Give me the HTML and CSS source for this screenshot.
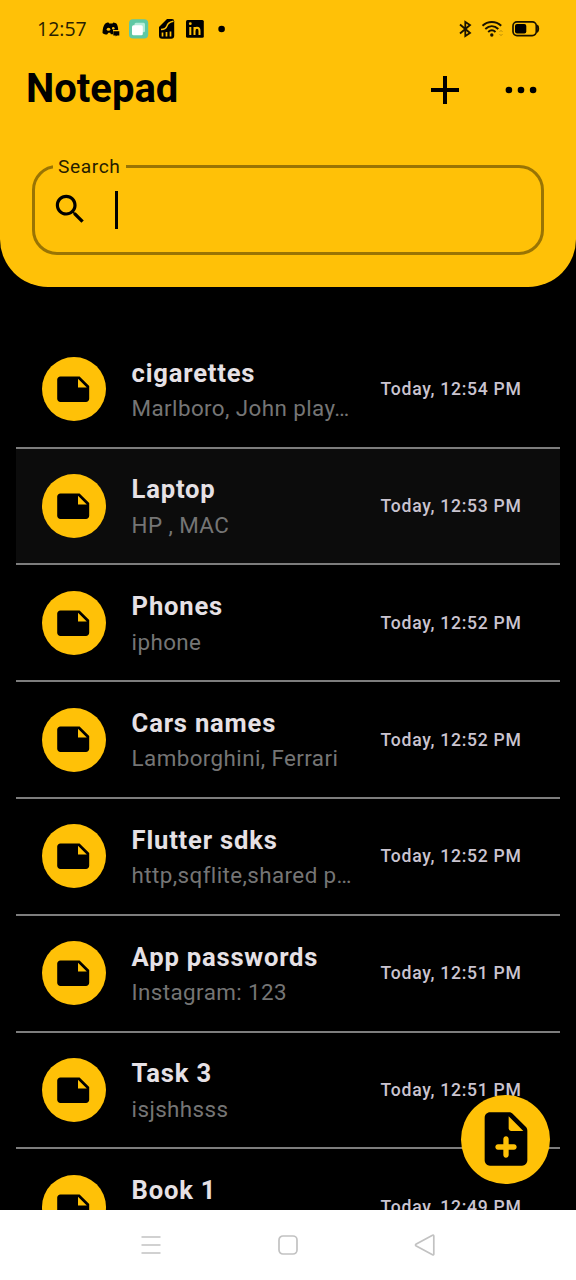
FILE: index.html
```html
<!DOCTYPE html>
<html lang="en">
<head>
<meta charset="utf-8">
<title>Notepad</title>
<link rel="stylesheet" href="styles.css">
</head>
<body>
<svg class="defs" aria-hidden="true">
  <symbol id="note" viewBox="0 0 24 24"><path d="M22 10l-6-6H4c-1.1 0-2 .9-2 2v12.01c0 1.1.9 1.99 2 1.99l16-.01c1.1 0 2-.89 2-1.99v-8zm-7-4.5l5.5 5.5H15V5.5z"/></symbol>
</svg>
<div class="app">
  <header class="header">
    <div class="status">
      <span class="clock">12:57</span>
      <svg class="status-left" viewBox="100 16 128 26" width="128" height="26">
        <path d="M102.500 33c0-4 1-7.500 2.500-9.300 1.200-.9 2.300-1.200 3.500-1.200l.8 1h3.200l.8-1c1.400.1 2.600.5 3.300 1.300 1 1.700 1.500 3.500 1.600 6.200H113v4.300h-2.200l-.6-1.500h-1.800l-1.300 1.700c-1.800 0-3.300-.4-4.600-1.500z"/>
        <ellipse cx="108.500" cy="29.300" rx="1.800" ry="1.500" fill="#ffc107"/><ellipse cx="113.300" cy="28.300" rx="1.300" ry="1.200" fill="#ffc107"/>
        <path d="M113.300 31.300h6v4.200h-2.400l-1.200 1v-1h-2.400z"/>
        <rect x="129" y="19.300" width="19.200" height="19.300" rx="4" fill="#5fc8a4"/>
        <rect x="134.500" y="22.800" width="10.500" height="9.500" rx="1.500" fill="#b5ecd8"/>
        <rect x="132" y="25.300" width="10.800" height="10" rx="1.500" fill="#fff"/>
        <path d="M159 27l8-8h5a2.200 2.200 0 0 1 2.200 2.200v14.600a3 3 0 0 1-3 3H162a3 3 0 0 1-3-3z"/>
        <path d="M161 29.600c4 0 5.200-1.500 6-3.800.8-2.700 2.500-4 6.500-4.600" fill="none" stroke="#ffc107" stroke-width="1.500"/>
        <path d="M162.500 36.500v-4M166.500 36.500v-4.500M170.500 36.500v-5" stroke="#ffc107" stroke-width="1.700"/>
        <rect x="186" y="20" width="17.800" height="17.800" rx="1.500"/>
        <path d="M190.300 27v8M194.500 35v-8M194.500 31c0-4.200 5-4.200 5 0v4" fill="none" stroke="#ffc107" stroke-width="2"/>
        <circle cx="190.300" cy="23.700" r="1.400" fill="#ffc107"/>
        <circle cx="221.600" cy="29" r="3.300"/>
      </svg>
      <svg class="status-right" viewBox="456 16 88 26" width="88" height="26" fill="none" stroke="#1a1300">
        <path d="M460 24.500l10 8.500-4.700 3V22l4.700 3-10 8.500" stroke-width="1.800"/>
        <path d="M482.500 25.700c5.400-5 13.300-5 18.700 0M485.300 28.900c4-3.600 9-3.600 13 0M488.200 31.900c2.400-2.200 4.900-2.200 7.300 0" stroke-width="2"/>
        <circle cx="491.800" cy="35" r="1.700" fill="#1a1300" stroke="none"/>
        <path d="M499.500 32l1.500-1.700 1.500 1.700M499.500 34l1.500 1.700 1.500-1.700" stroke="#b88c08" stroke-width=".9"/>
        <rect x="513" y="21.900" width="23.300" height="13.700" rx="4" stroke-width="1.700"/>
        <rect x="515" y="24" width="11.300" height="9.600" rx="2" fill="#000" stroke="none"/>
        <path d="M537 25.500c1.600.8 1.600 5.700 0 6.500" stroke-width="2"/>
      </svg>
    </div>
    <div class="titlebar">
      <h1>Notepad</h1>
      <svg viewBox="0 0 24 24" width="48" height="48"><path d="M19 13h-6v6h-2v-6H5v-2h6V5h2v6h6v2z"/></svg>
      <svg class="more" viewBox="0 0 32 8" width="32" height="8"><circle cx="3.900" cy="4" r="3.300"/><circle cx="16" cy="4" r="3.300"/><circle cx="28.100" cy="4" r="3.300"/></svg>
    </div>
    <div class="search">
      <span class="search-label">Search</span>
      <svg viewBox="0 0 24 24" width="38.400" height="38.400"><path d="M15.500 14h-.79l-.28-.27C15.410 12.590 16 11.110 16 9.500 16 5.910 13.090 3 9.500 3S3 5.910 3 9.500 5.910 16 9.500 16c1.610 0 3.090-.59 4.230-1.570l.27.28v.79l5 4.990L20.490 19l-4.990-5zm-6 0C7.010 14 5 11.990 5 9.500S7.010 5 9.500 5 14 7.010 14 9.500 11.990 14 9.500 14z"/></svg>
      <span class="caret"></span>
    </div>
  </header>

  <main class="list">
    <article class="row"><span class="avatar"><svg><use href="#note"/></svg></span><div class="body"><h2>cigarettes</h2><p>Marlboro, John play…</p></div><time>Today, 12:54 PM</time></article>
    <article class="row active"><span class="avatar"><svg><use href="#note"/></svg></span><div class="body"><h2>Laptop</h2><p>HP , MAC</p></div><time>Today, 12:53 PM</time></article>
    <article class="row"><span class="avatar"><svg><use href="#note"/></svg></span><div class="body"><h2>Phones</h2><p>iphone</p></div><time>Today, 12:52 PM</time></article>
    <article class="row"><span class="avatar"><svg><use href="#note"/></svg></span><div class="body"><h2>Cars names</h2><p>Lamborghini, Ferrari</p></div><time>Today, 12:52 PM</time></article>
    <article class="row"><span class="avatar"><svg><use href="#note"/></svg></span><div class="body"><h2>Flutter sdks</h2><p>http,sqflite,shared p…</p></div><time>Today, 12:52 PM</time></article>
    <article class="row"><span class="avatar"><svg><use href="#note"/></svg></span><div class="body"><h2>App passwords</h2><p>Instagram: 123</p></div><time>Today, 12:51 PM</time></article>
    <article class="row"><span class="avatar"><svg><use href="#note"/></svg></span><div class="body"><h2>Task 3</h2><p>isjshhsss</p></div><time>Today, 12:51 PM</time></article>
    <article class="row"><span class="avatar"><svg><use href="#note"/></svg></span><div class="body"><h2>Book 1</h2><p>&nbsp;</p></div><time>Today, 12:49 PM</time></article>
  </main>

  <div class="fab">
    <svg viewBox="0 0 24 24" width="64" height="64"><path d="M14.590 2.590c-.38-.38-.89-.59-1.420-.59H6c-1.100 0-2 .9-2 2v16c0 1.100.89 2 1.990 2H18c1.100 0 2-.9 2-2V8.830c0-.53-.21-1.040-.59-1.410l-4.820-4.830zM15 16h-2v2c0 .55-.45 1-1 1s-1-.45-1-1v-2H9c-.55 0-1-.45-1-1s.45-1 1-1h2v-2c0-.55.45-1 1-1s1 .45 1 1v2h2c.55 0 1 .45 1 1s-.45 1-1 1zm-2-8V3.500L18.500 9H14c-.55 0-1-.45-1-1z"/></svg>
  </div>

  <nav class="navbar">
    <svg viewBox="0 0 22 22" width="22" height="22"><path d="M1.500 3h19M1.500 11h19M1.500 19h19"/></svg>
    <svg viewBox="0 0 22 22" width="22" height="22"><rect x="2" y="2" width="18" height="18" rx="4"/></svg>
    <svg viewBox="0 0 22 22" width="22" height="22"><path d="M18.500 1.200q1.300-.5 1.300.9v17.800q0 1.400-1.300.9L2.300 12q-1.600-1 0-2z"/></svg>
  </nav>
</div>
</body>
</html>
```
FILE: styles.css
```css
* { box-sizing: border-box; margin: 0; padding: 0; }
body { background: #000; font-family: Roboto, "Liberation Sans", sans-serif; }
svg { display: block; flex: none; }
.defs { position: absolute; width: 0; height: 0; }

.app {
  position: relative;
  display: flex;
  flex-direction: column;
  width: 576px;
  height: 1280px;
  overflow: hidden;
}

.header {
  flex: none;
  height: 286.500px;
  background: #ffc107;
  border-radius: 0 0 48px 48px;
}
.status {
  display: flex;
  align-items: center;
  height: 58px;
  padding: 0 32px 0 37px;
}
.clock {
  width: 63px;
  padding-bottom: 2px;
  font: 19.500px "Open Sans", sans-serif;
  color: #2a1f00;
}
.status-right { margin-left: auto; }

.titlebar {
  display: flex;
  align-items: center;
  height: 63px;
  padding: 0 39px 0 26px;
}
.titlebar h1 {
  flex: 1;
  padding-bottom: 1px;
  font-size: 40px;
  font-weight: 700;
  line-height: 48px;
}
.more { margin-left: 36px; }

.search {
  position: relative;
  display: flex;
  align-items: center;
  gap: 25.600px;
  width: 512px;
  height: 90px;
  margin: 44px 0 0 32px;
  padding: 0 0 1px 16.200px;
  border: 3px solid #997404;
  border-radius: 25px;
}
.search-label {
  position: absolute;
  left: 18px;
  top: -13px;
  width: 73px;
  padding-left: 5px;
  background: #ffc107;
  color: #271d00;
  font-size: 19.200px;
  line-height: 24px;
  letter-spacing: .6px;
}
.caret { width: 3px; height: 38px; background: #000; }

.list {
  flex: 1;
  min-height: 0;
  overflow: hidden;
  padding: 45.400px 16px 0;
}
.row {
  display: flex;
  align-items: center;
  height: 116.800px;
  padding: 0 38.400px 0 25.600px;
  border-bottom: 2px solid #7d7d7d;
}
.row.active { background: #0c0c0c; }
.avatar {
  display: flex;
  align-items: center;
  justify-content: center;
  flex: none;
  width: 64px;
  height: 64px;
  margin-right: 26px;
  border-radius: 50%;
  background: #ffc107;
}
.avatar svg { width: 38.400px; height: 38.400px; }
.body { width: 222px; }
.body h2 {
  color: #e6e1e5;
  font-size: 25.600px;
  font-weight: 700;
  line-height: 38.400px;
  letter-spacing: .8px;
}
.body p {
  color: #757575;
  font-size: 22.400px;
  line-height: 33px;
  letter-spacing: .4px;
  white-space: nowrap;
}
.row time {
  margin-left: auto;
  color: #cac4d0;
  font-size: 17.600px;
  font-weight: 500;
  letter-spacing: .72px;
  white-space: nowrap;
}

.fab {
  position: absolute;
  left: 460.800px;
  top: 1094.500px;
  display: flex;
  align-items: center;
  justify-content: center;
  width: 89.600px;
  height: 89.600px;
  border-radius: 50%;
  background: #ffc107;
}

.navbar {
  display: flex;
  align-items: center;
  justify-content: center;
  gap: 115px;
  flex: none;
  height: 70.500px;
  background: #fff;
}
.navbar svg { fill: none; stroke: #c2c2c2; stroke-width: 1.700; }
```
